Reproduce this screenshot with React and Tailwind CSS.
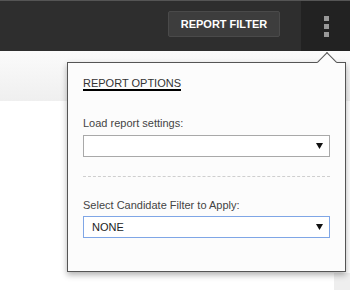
import React from "react";

function Caret() {
  return (
    <svg width="7" height="6" viewBox="0 0 7 6" className="block">
      <polygon points="0,0 7,0 3.5,6" fill="#111" />
    </svg>
  );
}

export default function App() {
  return (
    <div className="relative w-[350px] h-[290px] overflow-hidden bg-white font-['Liberation_Sans',Arial,sans-serif]">
      {/* Header */}
      <div className="flex h-[51px] border-t border-[#555] bg-[#2e2e2e]">
        <div className="flex-1 flex justify-end items-start">
          <div className="mt-[10px] mr-[21px] h-[26px] w-[112px] flex items-center justify-center rounded-[2px] border border-[#4a4a4a] bg-[#3d3d3d] text-white text-[11px] font-bold leading-none">
            REPORT FILTER
          </div>
        </div>
        <div className="w-[49px] bg-[#222] flex flex-col items-center pt-[15px] gap-[3px] pl-[2px]">
          <div className="w-[5px] h-[5px] bg-[#999]" />
          <div className="w-[5px] h-[5px] bg-[#999]" />
          <div className="w-[5px] h-[5px] bg-[#999]" />
        </div>
      </div>
      {/* Sub band */}
      <div className="h-[50px] bg-gradient-to-b from-[#fbfbfb] to-[#efefef]" />
      {/* Body */}
      <div className="flex justify-end">
        <div className="mt-[172px] w-[16px] h-[20px] bg-[#eeeeee]" />
      </div>

      {/* Dropdown panel */}
      <div className="absolute left-[67px] top-[62px] w-[279px] h-[210px] border border-[#555] bg-[#fcfcfc] shadow-[0_3px_6px_rgba(0,0,0,0.3)] px-[15px] pt-[14px] leading-[12px]">
        <div className="absolute left-[252px] top-[-8px] w-[14px] h-[14px] rotate-45 border-t border-l border-[#555] bg-[#fcfcfc]" />
        <div className="w-fit text-[11px] leading-[12px] text-[#333] border-b-2 border-black">
          REPORT OPTIONS
        </div>
        <div className="mt-[26px] text-[11px] leading-[12px] text-[#444]">
          Load report settings:
        </div>
        <div className="mt-[6px] h-[22px] border border-[#a9a9a9] bg-white flex items-center justify-end pr-[6px]">
          <Caret />
        </div>
        <div className="mt-[19px] border-t border-dashed border-[#cfcfcf]" />
        <div className="mt-[22px] text-[11px] leading-[12px] text-[#444]">
          Select Candidate Filter to Apply:
        </div>
        <div className="mt-[5px] h-[22px] border border-[#7fa6e6] bg-white flex items-center justify-between pl-[8px] pr-[6px] text-[11px] text-[#222]">
          <span>NONE</span>
          <Caret />
        </div>
      </div>
    </div>
  );
}
